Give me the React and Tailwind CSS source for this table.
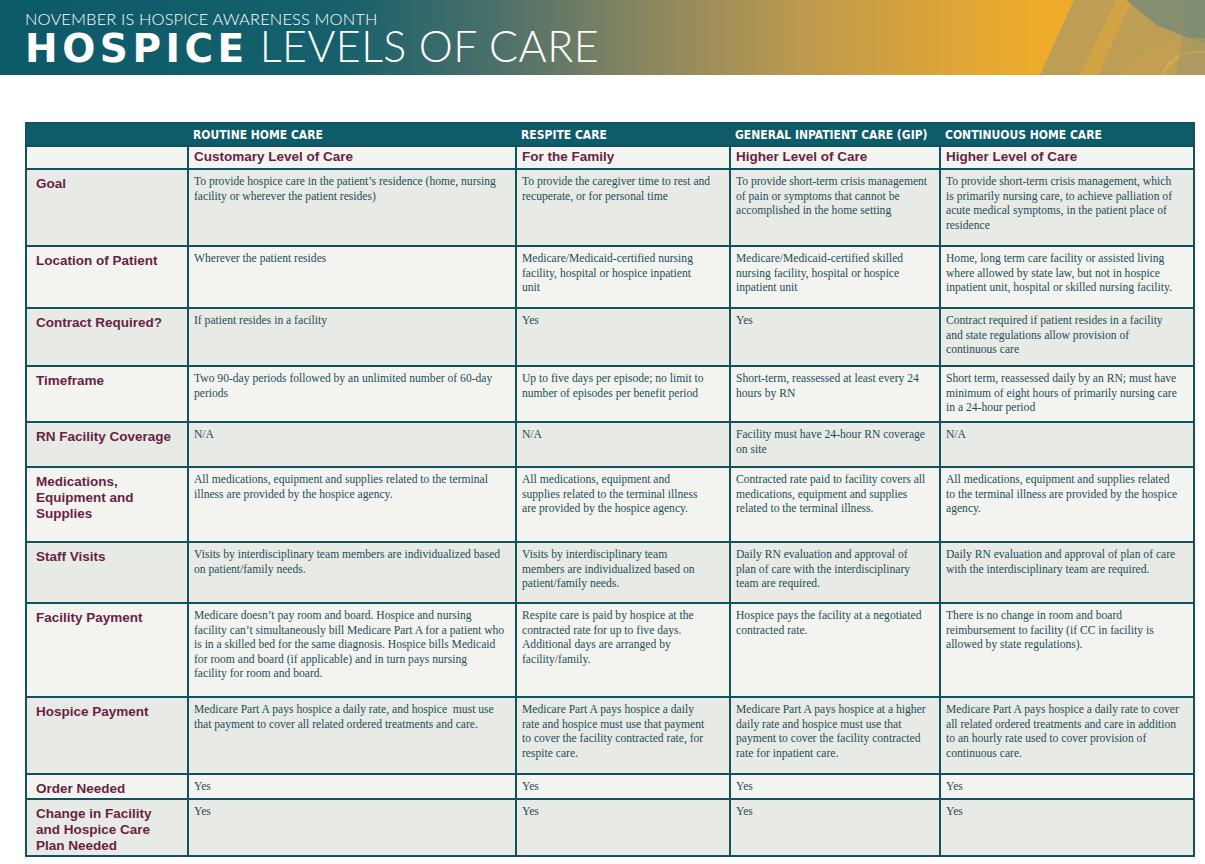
const columns = [
  { title: 'ROUTINE HOME CARE', sub: 'Customary Level of Care' },
  { title: 'RESPITE CARE', sub: 'For the Family' },
  { title: 'GENERAL INPATIENT CARE (GIP)', sub: 'Higher Level of Care' },
  { title: 'CONTINUOUS HOME CARE', sub: 'Higher Level of Care' },
];

// line breaks follow the printed sheet
const rows = [
  {
    label: 'Goal',
    h: 'h-[75px]',
    cells: [
      "To provide hospice care in the patient’s residence (home, nursing\nfacility or wherever the patient resides)",
      'To provide the caregiver time to rest and\nrecuperate, or for personal time',
      'To provide short-term crisis management\nof pain or symptoms that cannot be\naccomplished in the home setting',
      'To provide short-term crisis management, which\nis primarily nursing care, to achieve palliation of\nacute medical symptoms, in the patient place of\nresidence',
    ],
  },
  {
    label: 'Location of Patient',
    h: 'h-[60px]',
    cells: [
      'Wherever the patient resides',
      'Medicare/Medicaid-certified nursing\nfacility, hospital or hospice inpatient\nunit',
      'Medicare/Medicaid-certified skilled\nnursing facility, hospital or hospice\ninpatient unit',
      'Home, long term care facility or assisted living\nwhere allowed by state law, but not in hospice\ninpatient unit, hospital or skilled nursing facility.',
    ],
  },
  {
    label: 'Contract Required?',
    h: 'h-[56px]',
    cells: [
      'If patient resides in a facility',
      'Yes',
      'Yes',
      'Contract required if patient resides in a facility\nand state regulations allow provision of\ncontinuous care',
    ],
  },
  {
    label: 'Timeframe',
    h: 'h-[54px]',
    cells: [
      'Two 90-day periods followed by an unlimited number of 60-day\nperiods',
      'Up to five days per episode; no limit to\nnumber of episodes per benefit period',
      'Short-term, reassessed at least every 24\nhours by RN',
      'Short term, reassessed daily by an RN; must have\nminimum of eight hours of primarily nursing care\nin a 24-hour period',
    ],
  },
  {
    label: 'RN Facility Coverage',
    h: 'h-[43px]',
    cells: ['N/A', 'N/A', 'Facility must have 24-hour RN coverage\non site', 'N/A'],
  },
  {
    label: 'Medications,\nEquipment and\nSupplies',
    h: 'h-[73px]',
    cells: [
      'All medications, equipment and supplies related to the terminal\nillness are provided by the hospice agency.',
      'All medications, equipment and\nsupplies related to the terminal illness\nare provided by the hospice agency.',
      'Contracted rate paid to facility covers all\nmedications, equipment and supplies\nrelated to the terminal illness.',
      'All medications, equipment and supplies related\nto the terminal illness are provided by the hospice\nagency.',
    ],
  },
  {
    label: 'Staff Visits',
    h: 'h-[59px]',
    cells: [
      'Visits by interdisciplinary team members are individualized based\non patient/family needs.',
      'Visits by interdisciplinary team\nmembers are individualized based on\npatient/family needs.',
      'Daily RN evaluation and approval of\nplan of care with the interdisciplinary\nteam are required.',
      'Daily RN evaluation and approval of plan of care\nwith the interdisciplinary team are required.',
    ],
  },
  {
    label: 'Facility Payment',
    h: 'h-[92px]',
    cells: [
      "Medicare doesn’t pay room and board. Hospice and nursing\nfacility can’t simultaneously bill Medicare Part A for a patient who\nis in a skilled bed for the same diagnosis. Hospice bills Medicaid\nfor room and board (if applicable) and in turn pays nursing\nfacility for room and board.",
      'Respite care is paid by hospice at the\ncontracted rate for up to five days.\nAdditional days are arranged by\nfacility/family.',
      'Hospice pays the facility at a negotiated\ncontracted rate.',
      'There is no change in room and board\nreimbursement to facility (if CC in facility is\nallowed by state regulations).',
    ],
  },
  {
    label: 'Hospice Payment',
    h: 'h-[75px]',
    cells: [
      'Medicare Part A pays hospice a daily rate, and hospice  must use\nthat payment to cover all related ordered treatments and care.',
      'Medicare Part A pays hospice a daily\nrate and hospice must use that payment\nto cover the facility contracted rate, for\nrespite care.',
      'Medicare Part A pays hospice at a higher\ndaily rate and hospice must use that\npayment to cover the facility contracted\nrate for inpatient care.',
      'Medicare Part A pays hospice a daily rate to cover\nall related ordered treatments and care in addition\nto an hourly rate used to cover provision of\ncontinuous care.',
    ],
  },
  {
    label: 'Order Needed',
    h: 'h-[23px]',
    cells: ['Yes', 'Yes', 'Yes', 'Yes'],
  },
  {
    label: 'Change in Facility\nand Hospice Care\nPlan Needed',
    h: 'h-[55px]',
    cells: ['Yes', 'Yes', 'Yes', 'Yes'],
  },
];

function Banner() {
  return (
    <div className="relative h-[75px] overflow-hidden bg-[linear-gradient(90deg,#0c5968_0%,#15606c_28%,#4f7169_42%,#8c8760_54%,#bb994f_66%,#dca43a_78%,#eeab2a_86%)]">
      <svg className="absolute right-0 top-0" width="165" height="75" viewBox="0 0 165 75">
        <polygon points="0,75 34,0 165,0 165,75" fill="#b19a60" opacity="0.8" />
        <polygon points="40,75 76,0 92,0 58,75" fill="#e7ab38" opacity="0.5" />
        <polygon points="86,0 165,0 165,44 118,26" fill="#5f8580" opacity="0.6" />
        <path d="M80 75 C 94 50, 128 36, 165 38 L 165 75 Z" fill="#c9a052" opacity="0.55" />
        <path d="M122 75 C 130 58, 146 50, 165 52" stroke="#e5b04c" strokeWidth="3" fill="none" opacity="0.55" />
        <polygon points="148,0 165,0 165,75 136,75" fill="#7b8f78" opacity="0.3" />
      </svg>
      <div className="relative pl-[25px] pt-[10px] text-white">
        <div className="font-['Lato','Liberation_Sans',sans-serif] font-light text-[16.5px] leading-[18px] tracking-[0.1px]">
          NOVEMBER IS HOSPICE AWARENESS MONTH
        </div>
        <div className="mt-[2px] flex items-baseline leading-[32px]">
          <span className="font-['DejaVu_Sans',sans-serif] font-bold text-[39px] tracking-[4.5px]">HOSPICE</span>
          <span className="ml-[11px] font-['Lato','Liberation_Sans',sans-serif] font-light text-[43px] tracking-[0.4px]">
            LEVELS OF CARE
          </span>
        </div>
      </div>
    </div>
  );
}

function CareTable() {
  const gray = 'bg-[#e8eae5]';
  const light = 'bg-[#f3f4f0]';
  return (
    <div className="ml-[25px] mt-[47px] w-[1170px] bg-[#12515e] p-[2px]">
      <div className="grid grid-cols-[160px_326px_212px_208px_252px] gap-[2px]">
        <div className="col-span-5 grid h-[21px] grid-cols-[162px_328px_214px_210px_252px] items-center bg-[#0e5b69] text-white">
          <div />
          {columns.map((c) => (
            <div
              key={c.title}
              className="pl-[4px] font-['DejaVu_Sans_Condensed','DejaVu_Sans',sans-serif] font-stretch-condensed font-bold text-[12px] leading-none whitespace-nowrap"
            >
              {c.title}
            </div>
          ))}
        </div>
        <div className={`${light} h-[21px]`} />
        {columns.map((c, i) => (
          <div
            key={i}
            className={`${light} flex items-center pl-[5px] font-['Liberation_Sans',Arial,sans-serif] font-bold text-[13.5px] text-[#6a1f44] whitespace-nowrap`}
          >
            {c.sub}
          </div>
        ))}
        {rows.map((r, ri) => {
          const bg = ri % 2 === 0 ? gray : light;
          return [
            <div
              key={r.label}
              className={`${bg} ${r.h} pl-[9px] pt-[6px] font-['Liberation_Sans',Arial,sans-serif] font-bold text-[13.5px] leading-[16px] text-[#6a1f44] whitespace-pre-line`}
            >
              {r.label}
            </div>,
            ...r.cells.map((t, ci) => (
              <div
                key={r.label + ci}
                className={`${bg} pl-[5px] pt-[5px] font-['Liberation_Serif','Times_New_Roman',serif] text-[11.6px] leading-[14.6px] text-[#1c4d5a] whitespace-pre overflow-hidden`}
              >
                {t}
              </div>
            )),
          ];
        })}
      </div>
    </div>
  );
}

export default function App() {
  return (
    <div className="min-h-[864px] w-[1205px] bg-white">
      <Banner />
      <CareTable />
    </div>
  );
}
